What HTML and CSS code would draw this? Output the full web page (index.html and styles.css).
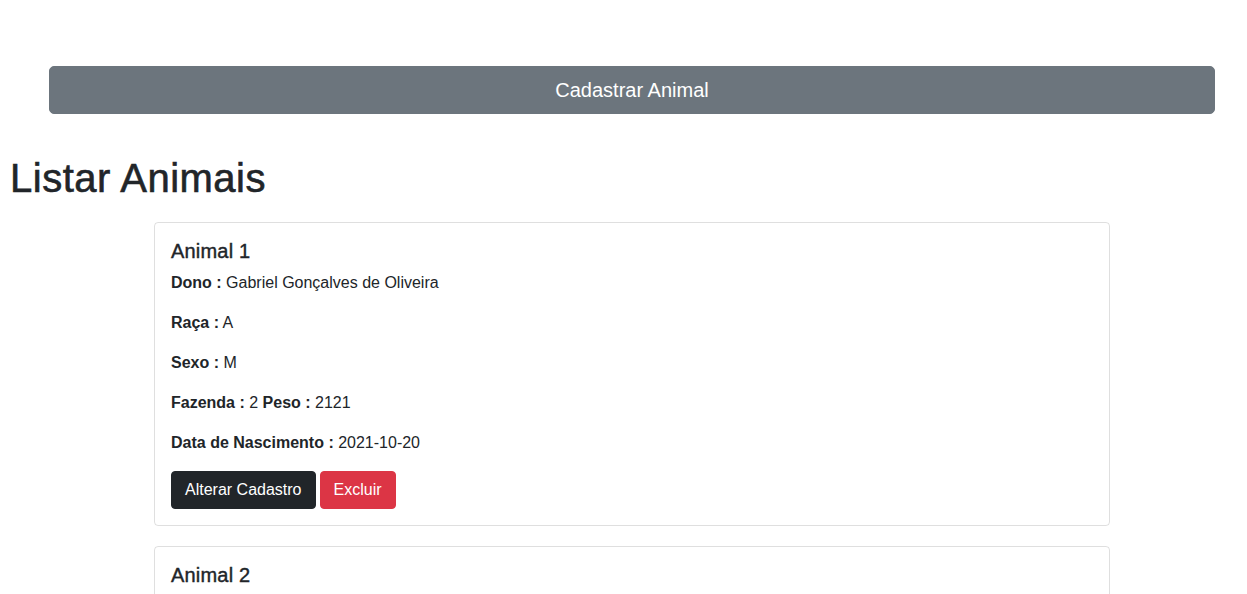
FILE: index.html
```html
<!DOCTYPE html>
<html lang="pt-BR">
<head>
<meta charset="utf-8">
<title>Listar Animais</title>
<link rel="stylesheet" href="styles.css">
</head>
<body>
<div class="top">
  <button class="btn btn-cadastrar" type="button">Cadastrar Animal</button>
</div>
<h1 class="title">Listar Animais</h1>
<div class="list">
  <div class="card">
    <h5 class="card-title">Animal 1</h5>
    <p><b>Dono :</b> Gabriel Gonçalves de Oliveira</p>
    <p><b>Raça :</b> A</p>
    <p><b>Sexo :</b> M</p>
    <p><b>Fazenda :</b> 2 <b>Peso :</b> 2121</p>
    <p><b>Data de Nascimento :</b> 2021-10-20</p>
    <div class="actions">
      <button class="btn btn-dark" type="button">Alterar Cadastro</button>
      <button class="btn btn-danger" type="button">Excluir</button>
    </div>
  </div>
  <div class="card">
    <h5 class="card-title">Animal 2</h5>
    <p><b>Dono :</b> Gabriel Gonçalves de Oliveira</p>
    <p><b>Raça :</b> B</p>
    <p><b>Sexo :</b> F</p>
    <p><b>Fazenda :</b> 2 <b>Peso :</b> 1500</p>
    <p><b>Data de Nascimento :</b> 2021-10-20</p>
    <div class="actions">
      <button class="btn btn-dark" type="button">Alterar Cadastro</button>
      <button class="btn btn-danger" type="button">Excluir</button>
    </div>
  </div>
</div>
</body>
</html>
```
FILE: styles.css
```css
* { box-sizing: border-box; }
body {
  margin: 0;
  font-family: "Liberation Sans", Arial, sans-serif;
  font-size: 16px;
  line-height: 1.5;
  color: #212529;
  background: #fff;
}
.top {
  padding: 66px 32px 0 49px;
}
.btn {
  font-family: inherit;
  font-size: 16px;
  line-height: 24px;
  padding: 6px 13px;
  border: 1px solid transparent;
  border-radius: 4px;
  color: #fff;
  cursor: pointer;
}
.btn-cadastrar {
  display: block;
  width: 100%;
  font-size: 20px;
  line-height: 30px;
  padding: 8px 16px;
  border-radius: 5px;
  background: #6c757d;
  border-color: #6c757d;
}
.title {
  margin: 40px 0 20px 10px;
  font-size: 40px;
  font-weight: 500;
  line-height: 48px;
  -webkit-text-stroke: 0.6px currentColor;
  letter-spacing: 0.5px;
}
.list {
  display: flex;
  flex-direction: column;
  gap: 20px;
  margin-left: 154px;
  width: 956px;
}
.card {
  border: 1px solid rgba(0, 0, 0, 0.125);
  border-radius: 4px;
  padding: 16px;
}
.card-title {
  margin: 0 0 8px;
  font-size: 20px;
  font-weight: 500;
  line-height: 24px;
  -webkit-text-stroke: 0.4px currentColor;
  letter-spacing: 0.2px;
}
.card p {
  margin: 0 0 16px;
}
.card b { font-weight: 700; }
.actions {
  display: flex;
  gap: 4px;
}
.btn-dark {
  background: #212529;
  border-color: #212529;
}
.btn-danger {
  background: #dc3545;
  border-color: #dc3545;
}
```
